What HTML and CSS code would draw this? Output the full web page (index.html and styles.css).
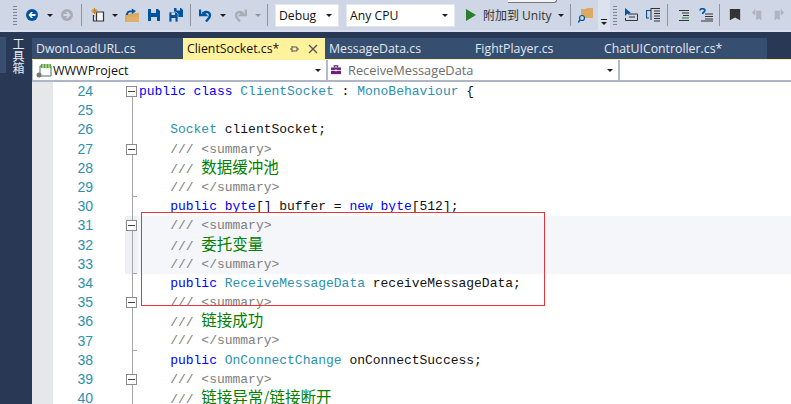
FILE: index.html
```html
<!DOCTYPE html>
<html lang="zh">
<head>
<meta charset="utf-8">
<title>ClientSocket.cs</title>
<link rel="stylesheet" href="styles.css">
</head>
<body>
<div class="window">
  <header class="toolbar">
    <span class="grip g1"></span>
    <svg class="ic w12 m1" viewBox="0 0 12 12"><circle cx="6" cy="6" r="6" fill="#00539c"/><path d="M9.5 5H5.5L7 3H5L2.5 6 5 9H7L5.5 7H9.5Z" fill="#fff"/></svg>
    <i class="caret m2"></i>
    <svg class="ic w12 m3" viewBox="0 0 12 12"><circle cx="6" cy="6" r="6" fill="#a8adb7"/><path d="M2.5 5H6.5L5 3H7L9.5 6 7 9H5L6.5 7H2.5Z" fill="#d5d9e4"/></svg>
    <span class="sep m4"></span>
    <svg class="ic w14 m5" viewBox="0 0 14 14"><path d="M5.5 4H12.500V13H5.500Z M2.500 7V13H5.500" fill="#f4f5f8" stroke="#333" stroke-width="1.200"/><path d="M3.500 0V6M.5 3H6.500M1.500 1L5.500 5M5.500 1L1.500 5" stroke="#c27d1a" stroke-width="1"/></svg>
    <i class="caret m6"></i>
    <svg class="ic w14 m7" viewBox="0 0 14 14"><path d="M0 6H5L6 5H14V14H0Z" fill="#dcaa64"/><path d="M1 14L3 9H14V14Z" fill="#e0b070"/><path d="M1 7C1 3 4 2 7 2.500L6.500 .5 11 3 7 6V4.500C4 4 3 5 3 7Z" fill="#00539c"/></svg>
    <svg class="ic w12 m8" viewBox="0 0 12 12"><path d="M0 0H10L12 2V12H0Z" fill="#00539c"/><path d="M3 0H8V4H3Z M3 8H9V12H3Z" fill="#cfd6e5"/></svg>
    <svg class="ic w14 m9" viewBox="0 0 14 14"><path d="M5 0H12L14 2V9H5Z" fill="#00539c"/><path d="M0 4H7L9 6V14H0Z" fill="#00539c" stroke="#cfd6e5" stroke-width=".7"/><path d="M7.500 0H11V2.500H7.500Z M2.500 4.500H6V7H2.500Z M2.500 10H6.500V14H2.500Z" fill="#cfd6e5"/></svg>
    <span class="sep m10"></span>
    <svg class="ic w14 m11" viewBox="0 0 14 14"><path d="M1 1.500V7H6.500L4.500 5C7 3 11 4 11 7.500 11 9.500 9 11 7 13.500" fill="none" stroke="#00539c" stroke-width="2.400"/></svg>
    <i class="caret m12"></i>
    <svg class="ic w14 m13" viewBox="0 0 14 14"><path d="M13 1.500V7H7.500L9.500 5C7 3 3 4 3 7.500 3 9.500 5 11 7 13.500" fill="none" stroke="#a8adb7" stroke-width="2.400"/></svg>
    <i class="caret off m14"></i>
    <span class="sep m15"></span>
    <div class="combo debug"><span>Debug</span><i class="caret"></i></div>
    <div class="combo cpu"><span>Any CPU</span><i class="caret"></i></div>
    <svg class="ic w10 m16" viewBox="0 0 10 12"><path d="M0 0L10 6 0 12Z" fill="#2a7d2a"/></svg>
    <span class="attach">附加到 Unity</span>
    <i class="caret m17"></i>
    <span class="sep m18"></span>
    <svg class="ic w16 m19" viewBox="0 0 16 16"><path d="M3 2H8L9 1H15V11H3Z" fill="#dcaa64"/><circle cx="4" cy="11" r="2.500" fill="#cfd6e5" stroke="#00539c" stroke-width="1.200"/><path d="M2 13L0 15.500" stroke="#00539c" stroke-width="1.500"/></svg>
    <span class="overflow"><i class="dash"></i><i class="caret"></i></span>
    <span class="grip g2"></span>
    <svg class="ic w14 m20" viewBox="0 0 14 14"><path d="M4 6H13.500V12.500H1.500V10" fill="none" stroke="#333"/><path d="M5 9H11" stroke="#333"/><path d="M1 0V8L3 6 7 5Z" fill="#00539c"/></svg>
    <svg class="ic w14 m21" viewBox="0 0 14 14"><path d="M5 2.500H0.500V10H3" fill="none" stroke="#00539c" stroke-width="1.200"/><path d="M5 0V12M5 .5H14M8 3H14M8 5.500H14M8 8H14M8 10.500H14M8 13H14" stroke="#333"/></svg>
    <span class="sep m22"></span>
    <svg class="ic w12 m23" viewBox="0 0 12 12"><path d="M1 1.500H11M4 4H11M5 6.500H11" stroke="#333"/><path d="M4 9H11" stroke="#2a7d2a"/><path d="M1 11.500H11" stroke="#333"/></svg>
    <svg class="ic w14 m24" viewBox="0 0 14 14"><path d="M1 2.500C1 0 6 0 6 2.500 6 4 3.500 4 3.500 6" fill="none" stroke="#00539c" stroke-width="1.600"/><path d="M6 6H14M6 8.500H14M6 11H14M2 13H14" stroke="#333"/></svg>
    <span class="sep m25"></span>
    <svg class="ic w12 m26" viewBox="0 0 12 14"><path d="M0 0H12V13L6 10 0 13Z" fill="#333"/></svg>
    <svg class="ic w12 m27" viewBox="0 0 12 14"><path d="M5 2V13L8 11 11 13V2Z M0 4L4 0V8Z" fill="#aeb4c0"/></svg>
    <svg class="ic w12 m28" viewBox="0 0 12 14"><path d="M1 2V13L4 11 7 13V2Z M12 4L8 0V8Z" fill="#aeb4c0"/></svg>
    <span class="tip"></span>
  </header>

  <div class="workspace">
    <aside class="rail">
      <span class="rail-tab"></span>
      <span class="rail-label">工具箱</span>
    </aside>
    <main class="main">
      <nav class="tabs">
        <span class="tab t1">DwonLoadURL.cs</span>
        <span class="tab active t2">ClientSocket.cs*
          <svg class="pin" viewBox="0 0 10 10"><path d="M1 5H3M3 2V8M3 3H8V7H3M8 5H10" fill="none" stroke="#555"/></svg>
          <svg class="close" viewBox="0 0 10 10"><path d="M1 1L9 9M9 1L1 9" stroke="#555" stroke-width="1.400"/></svg>
        </span>
        <span class="tab t3">MessageData.cs</span>
        <span class="tab t4">FightPlayer.cs</span>
        <span class="tab t5">ChatUIController.cs*</span>
      </nav>
      <div class="navbar">
        <div class="navbox n1">
          <svg class="proj" viewBox="0 0 16 16"><path d="M4 4H15V14H4Z" fill="#fff" stroke="#3c7a5a"/><circle cx="3" cy="13" r="2.500" fill="#777"/><path d="M5 2H15V6H5Z" fill="#5da13a"/><path d="M6 3H8M9 3H11M12 3H14M6 5H8M9 5H11M12 5H14" stroke="#d8f0c0"/></svg>
          <span>WWWProject</span><i class="caret"></i>
        </div>
        <div class="navbox n2">
          <svg class="member" viewBox="0 0 12 12"><path d="M0 3H12V11H0Z" fill="#68217a"/><path d="M4 3V1H8V3" fill="none" stroke="#68217a" stroke-width="1.500"/><path d="M0 6.500H12" stroke="#fff"/><path d="M5 5.500H7V7.500H5Z" fill="#fff"/></svg>
          <span class="muted">ReceiveMessageData</span><i class="caret"></i>
        </div>
        <div class="navbox n3"></div>
      </div>
      <section class="editor">
        <div class="line"><span class="margin"></span><span class="num">24</span><span class="fold start"><b></b></span><code><span class="kw">public class</span> <span class="ty">ClientSocket</span> : <span class="ty">MonoBehaviour</span> {</code></div>
        <div class="line"><span class="margin"></span><span class="num">25</span><span class="fold"></span><code></code></div>
        <div class="line"><span class="margin"></span><span class="num">26</span><span class="fold"></span><code>    <span class="ty">Socket</span> clientSocket;</code></div>
        <div class="line"><span class="margin"></span><span class="num">27</span><span class="fold"><b></b></span><code>    <span class="cm">/// &lt;summary&gt;</span></code></div>
        <div class="line"><span class="margin"></span><span class="num">28</span><span class="fold"></span><code>    <span class="cm">/// </span><span class="zh">数据缓冲池</span></code></div>
        <div class="line"><span class="margin"></span><span class="num">29</span><span class="fold tick"></span><code>    <span class="cm">/// &lt;/summary&gt;</span></code></div>
        <div class="line"><span class="margin"></span><span class="num">30</span><span class="fold"></span><code>    <span class="kw">public byte</span>[] buffer = <span class="kw">new byte</span>[512];</code></div>
        <div class="line hl"><span class="margin"></span><span class="num">31</span><span class="fold"><b></b></span><code>    <span class="cm">/// &lt;summary&gt;</span></code></div>
        <div class="line hl"><span class="margin"></span><span class="num">32</span><span class="fold"></span><code>    <span class="cm">/// </span><span class="zh">委托变量</span></code></div>
        <div class="line hl"><span class="margin"></span><span class="num">33</span><span class="fold tick"></span><code>    <span class="cm">/// &lt;/summary&gt;</span></code></div>
        <div class="line"><span class="margin"></span><span class="num">34</span><span class="fold"></span><code>    <span class="kw">public</span> <span class="ty">ReceiveMessageData</span> receiveMessageData;</code></div>
        <div class="line"><span class="margin"></span><span class="num">35</span><span class="fold"><b></b></span><code>    <span class="cm">/// &lt;summary&gt;</span></code></div>
        <div class="line"><span class="margin"></span><span class="num">36</span><span class="fold"></span><code>    <span class="cm">/// </span><span class="zh">链接成功</span></code></div>
        <div class="line"><span class="margin"></span><span class="num">37</span><span class="fold tick"></span><code>    <span class="cm">/// &lt;/summary&gt;</span></code></div>
        <div class="line"><span class="margin"></span><span class="num">38</span><span class="fold"></span><code>    <span class="kw">public</span> <span class="ty">OnConnectChange</span> onConnectSuccess;</code></div>
        <div class="line"><span class="margin"></span><span class="num">39</span><span class="fold"><b></b></span><code>    <span class="cm">/// &lt;summary&gt;</span></code></div>
        <div class="line"><span class="margin"></span><span class="num">40</span><span class="fold"></span><code>    <span class="cm">/// </span><span class="zh">链接异常/链接断开</span></code></div>
        <div class="annotation"></div>
      </section>
    </main>
  </div>
</div>
</body>
</html>
```
FILE: styles.css
```css
* { box-sizing: border-box; }
html, body { margin: 0; height: 100%; overflow: hidden; background: #293955; }
.window { width: 791px; height: 404px; display: flex; flex-direction: column; overflow: hidden; font-family: "Open Sans", "Noto Sans CJK SC", sans-serif; }

.toolbar { position: relative; flex: 0 0 32px; height: 32px; display: flex; align-items: center; background: #cfd6e5; border-bottom: 2px solid #d8deed; }
.ic { display: block; flex: none; }
.w10 { width: 10px; height: 12px; } .w12 { width: 12px; height: 12px; } .w14 { width: 14px; height: 14px; } .w16 { width: 16px; height: 16px; }
.caret { display: block; flex: none; width: 0; height: 0; border-left: 3px solid transparent; border-right: 3px solid transparent; border-top: 3px solid #1e1e1e; }
.caret.off { border-top-color: #8f949e; }
.sep { flex: none; width: 1px; height: 22px; background: #8d95a5; }
.grip { flex: none; width: 4px; height: 20px; background-image: radial-gradient(circle, #7c8496 .8px, transparent 1px); background-size: 2px 3px; }
.g1 { margin-left: 13px; }
.m1 { margin-left: 9px; } .m2 { margin-left: 9px; } .m3 { margin-left: 8px; } .m4 { margin-left: 8px; } .m5 { margin-left: 9px; }
.m6 { margin-left: 7px; } .m7 { margin-left: 7px; } .m8 { margin-left: 9px; } .m9 { margin-left: 9px; } .m10 { margin-left: 7px; }
.m11 { margin-left: 8px; } .m12 { margin-left: 7px; } .m13 { margin-left: 7px; } .m14 { margin-left: 8px; } .m15 { margin-left: 6px; }
.m16 { margin-left: 11px; } .m17 { margin-left: 6px; } .m18 { margin-left: 6px; } .m19 { margin-left: 7px; }
.g2 { margin-left: 3px; }
.m20 { margin-left: 7px; } .m21 { margin-left: 8px; } .m22 { margin-left: 7px; } .m23 { margin-left: 10px; } .m24 { margin-left: 9px; }
.m25 { margin-left: 6px; } .m26 { margin-left: 9px; } .m27 { margin-left: 10px; } .m28 { margin-left: 10px; }

.combo { flex: none; height: 23px; display: flex; align-items: center; justify-content: space-between; padding: 0 6px 0 3px; background: #fff; border: 1px solid #e3e7f0; font-size: 12.2px; color: #111; }
.debug { width: 64px; margin-left: 7px; }
.cpu { width: 109px; margin-left: 7px; }
.attach { flex: none; width: 69px; margin-left: 7px; font-size: 12px; color: #333; white-space: nowrap; }
.overflow { flex: none; width: 12px; height: 30px; margin-left: 4px; background: #dde2ef; display: flex; flex-direction: column; align-items: center; justify-content: flex-end; gap: 2px; padding-bottom: 5px; }
.dash { display: block; width: 6px; height: 1px; background: #1e1e1e; }
.tip { position: absolute; left: 508px; top: 0; width: 49px; height: 3px; background: #f2f3f6; border-bottom: 1px solid #777; border-right: 1px solid #777; border-radius: 0 0 4px 0; }

.workspace { flex: 1; display: flex; min-height: 0; }
.rail { flex: 0 0 32px; display: flex; padding-top: 5px; background: #293955; }
.rail-tab { flex: none; width: 6px; height: 36px; background: #3a4e72; }
.rail-label { margin: 1px 0 0 6px; width: 12px; height: 38px; writing-mode: vertical-rl; font-size: 12px; line-height: 12px; color: #e8ecf4; font-family: "Noto Sans CJK SC", sans-serif; }

.main { flex: 1; min-width: 0; display: flex; flex-direction: column; padding-top: 6px; }
.tabs { flex: 0 0 22px; display: flex; background: #293955; font-size: 12.3px; color: #e4e8f0; border-bottom: 1px solid #fff29d; }
.tab { display: flex; align-items: center; flex: none; height: 21px; background: #364e6f; padding-left: 4px; white-space: nowrap; }
.t1 { width: 151px; } .t2 { width: 142px; padding-left: 4px; } .t3 { width: 146px; } .t4 { width: 129px; } .t5 { width: 167px; }
.tab.active { background: #fff29d; color: #111; }
.pin { width: 10px; height: 10px; margin-left: 10px; }
.close { width: 10px; height: 10px; margin-left: 9px; }

.navbar { flex: 0 0 22px; display: flex; gap: 2px; padding-left: 1px; background: #b3bbcc; border-bottom: 2px solid #aeb6c6; font-size: 12.5px; color: #111; }
.navbox { display: flex; align-items: center; height: 20px; background: #fff; padding: 0 5px 0 4px; }
.n1 { width: 293px; }
.n2 { width: 290px; padding-left: 3px; }
.n3 { flex: 1; }
.navbox .caret { margin-left: auto; }
.proj { width: 16px; height: 16px; margin-right: 1px; margin-left: -1px; }
.member { width: 10px; height: 10px; margin: 0 7px 0 0; }
.muted { color: #6d6d6d; font-size: 12.8px; }

.editor { position: relative; flex: 1; min-height: 0; overflow: hidden; background: #fff; }
.line { display: flex; align-items: center; height: 19.2px; }
.margin { flex: none; width: 21px; height: 100%; background: #e6e7e8; }
.num { flex: none; width: 40px; text-align: right; font: 14px/19px "Liberation Sans", sans-serif; color: #2b91af; }
.fold { flex: none; width: 12px; height: 100%; margin-left: 32px; display: flex; align-items: center; padding-left: 1px; background: linear-gradient(#a5a5a5, #a5a5a5) 7px 0 / 1px 100% no-repeat; }
.fold.start { background-size: 1px 50%; background-position: 7px 100%; }
.fold.tick { background-image: linear-gradient(#a5a5a5, #a5a5a5), linear-gradient(#a5a5a5, #a5a5a5); background-size: 1px 100%, 5px 1px; background-position: 7px 0, 7px 100%; }
.fold b { display: block; width: 11px; height: 11px; background: linear-gradient(#444, #444) center / 7px 1px no-repeat #fff; border: 1px solid #8a8a8a; }
code { flex: 1; height: 100%; padding-left: 2px; font: 13px/19.2px "Liberation Mono", "Noto Sans CJK SC", monospace; letter-spacing: -.01px; white-space: pre; color: #111; }
.hl code { background: #f5f6fa; }
.hl .fold { background-color: #edeff5; }
.kw { color: #0000ff; }
.ty { color: #2b91af; }
.cm { color: #808080; }
.zh { color: #008000; font-family: "Noto Sans CJK SC", sans-serif; font-size: 15.5px; line-height: 15px; letter-spacing: 0; }
.annotation { position: absolute; left: 109px; top: 130px; width: 404px; height: 94px; border: 1px solid #e53535; pointer-events: none; }
```
